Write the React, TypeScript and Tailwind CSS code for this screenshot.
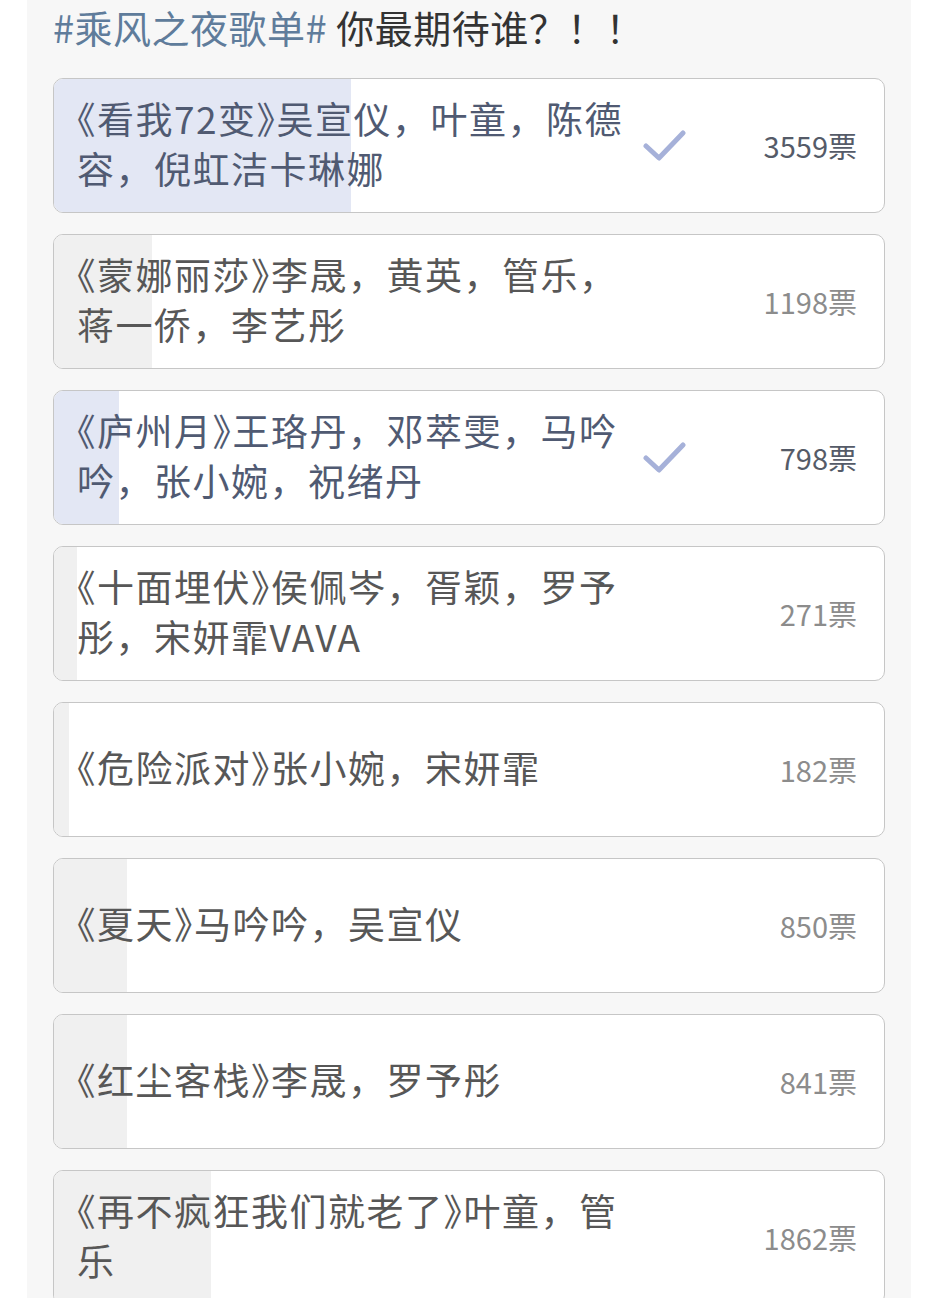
const options = [
    { title: "《看我72变》吴宣仪，叶童，陈德容，倪虹洁卡琳娜", votes: 3559, fill: 297, picked: true },
    { title: "《蒙娜丽莎》李晟，黄英，管乐，蒋一侨，李艺彤", votes: 1198, fill: 98, picked: false },
    { title: "《庐州月》王珞丹，邓萃雯，马吟吟，张小婉，祝绪丹", votes: 798, fill: 65, picked: true },
    { title: "《十面埋伏》侯佩岑，胥颖，罗予彤，宋妍霏VAVA", votes: 271, fill: 23, picked: false },
    { title: "《危险派对》张小婉，宋妍霏", votes: 182, fill: 15, picked: false },
    { title: "《夏天》马吟吟，吴宣仪", votes: 850, fill: 73, picked: false },
    { title: "《红尘客栈》李晟，罗予彤", votes: 841, fill: 73, picked: false },
    { title: "《再不疯狂我们就老了》叶童，管乐", votes: 1862, fill: 157, picked: false },
]

const Check = () => (
    <svg width="44" height="34" viewBox="0 0 44 34" fill="none">
        <path d="M4 17 L17 29 L41 4" stroke="#a6b1d9" strokeWidth="5" strokeLinecap="round" strokeLinejoin="round" />
    </svg>
)

// 书名号用半宽
const Title = ({ text }: { text: string }) => (
    <>
        {text.split(/([《》])/).map((part, i) =>
            part === "《" || part === "》" ? (
                <span key={i} className="[font-feature-settings:'halt']">{part}</span>
            ) : (
                <span key={i}>{part}</span>
            )
        )}
    </>
)

const App = () => {
    return (
        <div className="min-h-[1298px] bg-white flex justify-center" style={{ fontFamily: '"Noto Sans CJK SC", "Noto Sans", sans-serif' }}>
            <div className="w-[884px] bg-[#f7f7f7] px-[26px]">
                {/* header */}
                <div className="h-[78px] pt-[2px] text-[38px] tracking-[0.5px] leading-[50px] whitespace-nowrap">
                    <span className="text-[#5f7c9b]">#乘风之夜歌单#</span>
                    <span className="text-[#333333]"> 你最期待谁？！！</span>
                </div>
                {/* options */}
                <div className="flex flex-col gap-[21px]">
                    {options.map((o) => (
                        <div key={o.title} className="relative h-[135px] rounded-[10px] border border-[#c6c6c6] bg-white overflow-hidden">
                            <div
                                className={o.picked ? "absolute left-0 top-0 bottom-0 bg-[#e3e7f4]" : "absolute left-0 top-0 bottom-0 bg-[#f0f0f0]"}
                                style={{ width: o.fill }}
                            />
                            <div className="relative h-full flex items-center pl-[23px] pr-[27px]">
                                <div className={o.picked ? "w-[560px] -mt-[6px] text-[37px] tracking-[1.5px] leading-[50px] text-[#505a72]" : "w-[560px] -mt-[6px] text-[37px] tracking-[1.5px] leading-[50px] text-[#575757]"}>
                                    <Title text={o.title} />
                                </div>
                                <div className="w-[54px] flex justify-center">
                                    {o.picked && <Check />}
                                </div>
                                <div className={o.picked ? "ml-auto text-[29px] text-[#555b68]" : "ml-auto text-[29px] text-[#8c8c8c]"}>
                                    {o.votes}票
                                </div>
                            </div>
                        </div>
                    ))}
                </div>
            </div>
        </div>
    )
}

export default App
